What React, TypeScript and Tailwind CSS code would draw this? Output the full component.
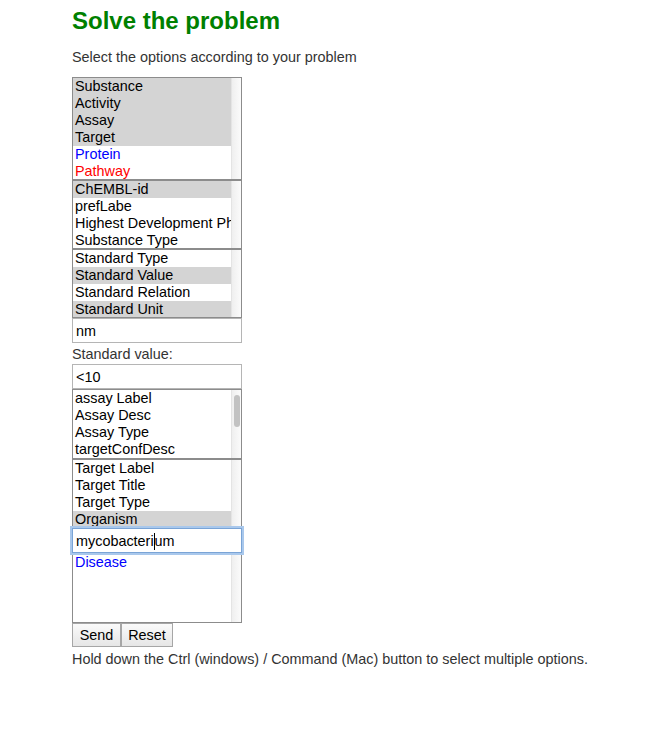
import React from "react";

type Item = { label: string; sel?: boolean; color?: string };

function ListBox({ items, h, thumb }: { items: Item[]; h: string; thumb?: boolean }) {
  return (
    <div className={`relative flex border border-[#8c8c8c] bg-white overflow-hidden ${h}`}>
      <div className="flex-1 min-w-0">
        {items.map((it, i) => (
          <div
            key={i}
            className={`h-[17px] leading-[17px] pl-[2px] whitespace-nowrap overflow-hidden text-[14.4px] ${it.sel ? "bg-[#d4d4d4]" : ""} ${it.color ?? "text-black"}`}
          >
            {it.label}
          </div>
        ))}
      </div>
      <div className="relative w-[10px] shrink-0 border-l border-[#e4e4e4] bg-gradient-to-r from-[#efefef] to-[#fbfbfb]">
        {thumb && (
          <div className="absolute left-[2px] top-[5px] w-[6px] h-[32px] rounded-full bg-[#c2c2c2]" />
        )}
      </div>
    </div>
  );
}

function Input({ children, focus }: { children: React.ReactNode; focus?: boolean }) {
  return (
    <div
      className={`h-[25px] flex items-center pl-[3px] pt-[2px] text-[14.4px] text-black bg-white border ${
        focus ? "border-[#7aa4d6] shadow-[0_0_0_2px_#a9c8ec]" : "border-[#b5b5b5]"
      }`}
    >
      {children}
    </div>
  );
}

export default function App() {
  return (
    <div className="min-h-[734px] bg-white pl-[72px] font-['Liberation_Sans',Arial,sans-serif]">
      <h1 className="pt-[7px] text-[24px] leading-[28px] font-bold text-[#008000]">
        Solve the problem
      </h1>
      <p className="mt-[14px] text-[14.4px] leading-[16px] text-[#333]">
        Select the options according to your problem
      </p>
      <div className="mt-[12px] w-[170px] flex flex-col">
        <ListBox
          h="h-[103px]"
          items={[
            { label: "Substance", sel: true },
            { label: "Activity", sel: true },
            { label: "Assay", sel: true },
            { label: "Target", sel: true },
            { label: "Protein", color: "text-[#0000ff]" },
            { label: "Pathway", color: "text-[#ff0000]" },
          ]}
        />
        <ListBox
          h="h-[69px]"
          items={[
            { label: "ChEMBL-id", sel: true },
            { label: "prefLabe" },
            { label: "Highest Development Phase" },
            { label: "Substance Type" },
          ]}
        />
        <ListBox
          h="h-[69px]"
          items={[
            { label: "Standard Type" },
            { label: "Standard Value", sel: true },
            { label: "Standard Relation" },
            { label: "Standard Unit", sel: true },
          ]}
        />
        <Input>nm</Input>
        <div className="h-[21px] flex items-center pt-[2px] text-[14.4px] text-[#333]">Standard value:</div>
        <Input>&lt;10</Input>
        <ListBox
          h="h-[70px]"
          thumb
          items={[
            { label: "assay Label" },
            { label: "Assay Desc" },
            { label: "Assay Type" },
            { label: "targetConfDesc" },
          ]}
        />
        <ListBox
          h="h-[69px]"
          items={[
            { label: "Target Label" },
            { label: "Target Title" },
            { label: "Target Type" },
            { label: "Organism", sel: true },
          ]}
        />
        <div className="relative z-10">
          <Input focus>
            <span>mycobacteri</span>
            <span className="inline-block w-px h-[17px] bg-black" />
            <span>um</span>
          </Input>
        </div>
        <ListBox h="h-[70px]" items={[{ label: "Disease", color: "text-[#0000ff]" }]} />
        <div className="flex">
          <button className="h-[24px] w-[49px] pt-[1px] border border-[#a6a6a6] bg-gradient-to-b from-[#fafafa] to-[#e6e6e6] text-[14.4px] text-black">
            Send
          </button>
          <button className="h-[24px] w-[52px] pt-[1px] border border-[#a6a6a6] bg-gradient-to-b from-[#fafafa] to-[#e6e6e6] text-[14.4px] text-black">
            Reset
          </button>
        </div>
      </div>
      <p className="mt-[4px] text-[14.4px] leading-[16px] text-[#333]">
        Hold down the Ctrl (windows) / Command (Mac) button to select multiple options.
      </p>
    </div>
  );
}
